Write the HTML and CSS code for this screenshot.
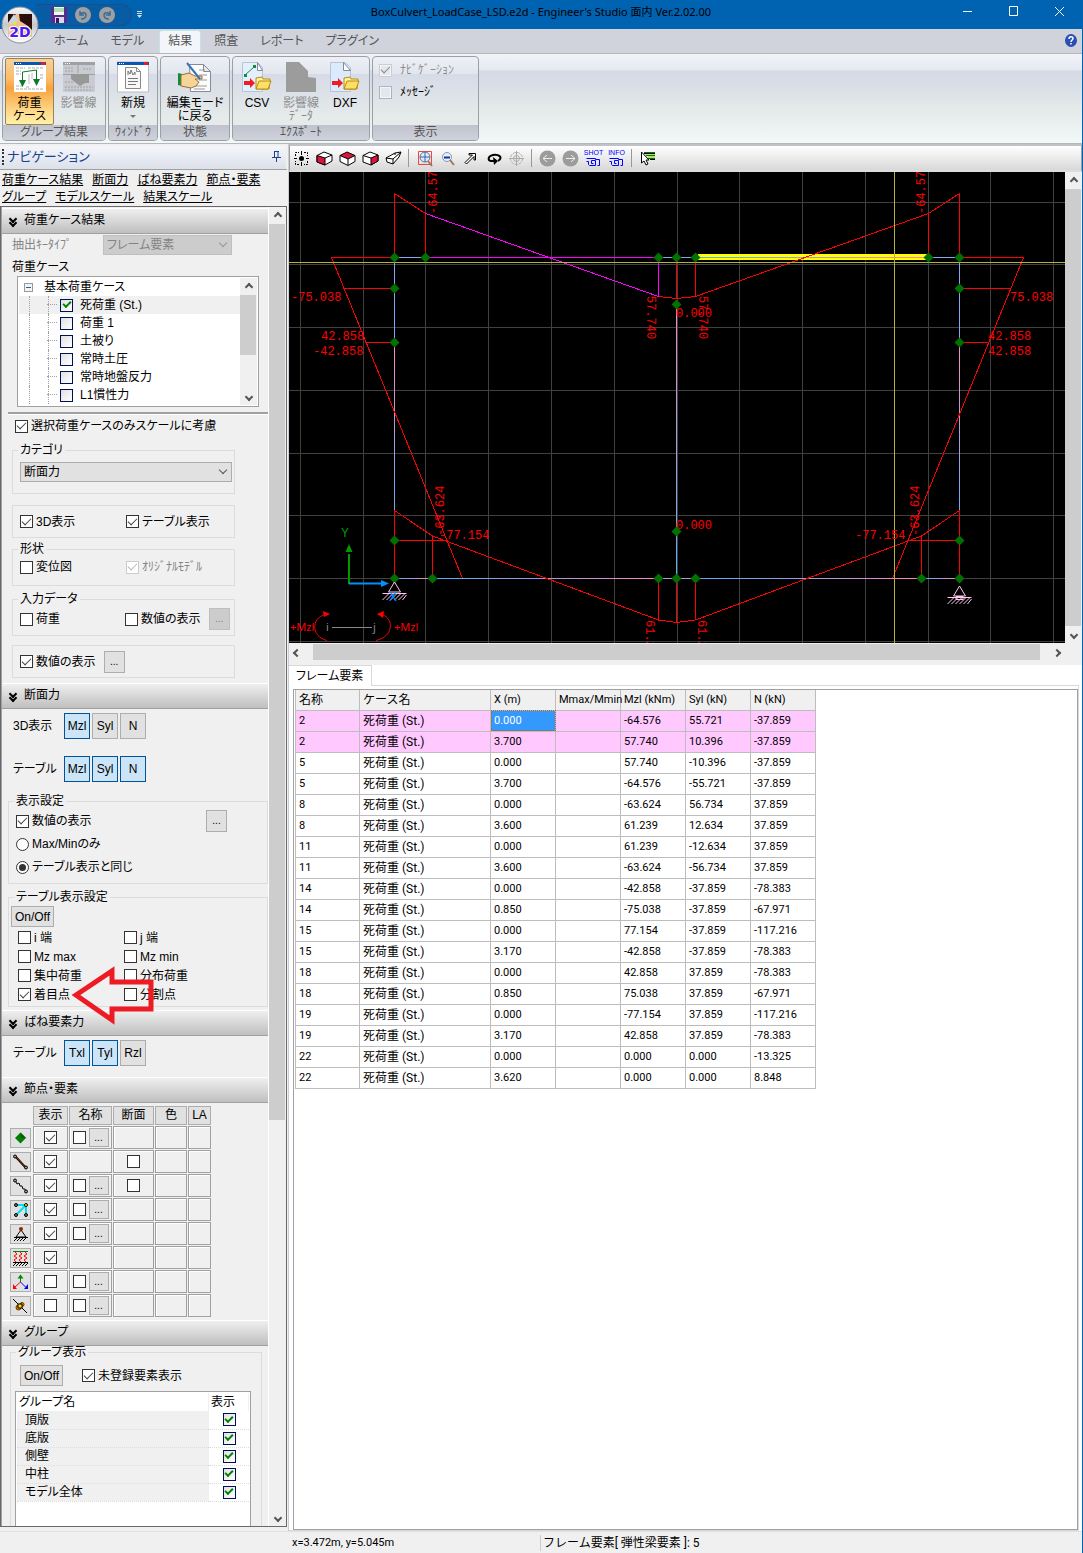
FILE: index.html
```html
<!DOCTYPE html>
<html lang="ja">
<head>
<meta charset="utf-8">
<title>BoxCulvert_LoadCase_LSD.e2d - Engineer's Studio 面内 Ver.2.02.00</title>
<link rel="stylesheet" href="styles.css">
</head>
<body>
<header class="titlebar">
  <div class="quick">
    <button class="plain" aria-label="上書き保存"><svg width="16" height="16" viewBox="0 0 16 16"><path d="M0 0h16v16H1L0 15z" fill="#5b2a8c"/><path d="M3 0h10v8H3z" fill="#f4f8f4"/><path d="M3 2h10M3 4h10" stroke="#6cc56c"/><path d="M4 10h9v6H4z" fill="#ddd6ea"/><path d="M5 11h3v5H5z" fill="#3a1560"/></svg></button>
    <button class="plain" aria-label="元に戻す"><svg width="16" height="16" viewBox="0 0 16 16"><circle cx="8" cy="8" r="8" fill="#a0a0a0"/><path d="M5 4v4h4M5 8c1-3 6-3 6 0s-2 4-5 4" fill="none" stroke="#3a6c9c" stroke-width="1.5"/></svg></button>
    <button class="plain" aria-label="やり直し"><svg width="16" height="16" viewBox="0 0 16 16"><circle cx="8" cy="8" r="8" fill="#a0a0a0"/><path d="M11 4v4H7M11 8c-1-3-6-3-6 0s2 4 5 4" fill="none" stroke="#3a6c9c" stroke-width="1.5"/></svg></button>
  </div>
  <button class="plain more" aria-label="カスタマイズ"><svg width="5" height="7" viewBox="0 0 5 7"><path d="M0 .5h5M0 2.500h5" stroke="#ddd"/><path d="M0 4h5L2.500 7z" fill="#ddd"/></svg></button>
  <h1 class="title">BoxCulvert_LoadCase_LSD.e2d - Engineer's Studio 面内 Ver.2.02.00</h1>
  <div class="wincontrols">
    <button class="plain" aria-label="最小化"><svg width="11" height="11" viewBox="0 0 11 11"><path d="M1 5.500h9" stroke="#fff"/></svg></button>
    <button class="plain" aria-label="最大化"><svg width="11" height="11" viewBox="0 0 11 11"><path d="M1.500.5h8v9h-8z" fill="none" stroke="#fff"/></svg></button>
    <button class="plain" aria-label="閉じる"><svg width="11" height="11" viewBox="0 0 11 11"><path d="M1 1l9 9M10 1l-9 9" stroke="#fff"/></svg></button>
  </div>
  <button class="plain appbutton" aria-label="メインメニュー"><svg width="40" height="40" viewBox="0 0 40 40"><defs><linearGradient id="ring" x2="0" y2="1"><stop stop-color="#f8f8fa"/><stop offset=".5" stop-color="#c6c8ce"/><stop offset="1" stop-color="#fff"/></linearGradient></defs><circle cx="20" cy="20" r="18" fill="url(#ring)" stroke="#8a8f9c"/><path d="M8 9h24v23H8z" fill="#2b0d0d"/><path d="M8 18l8-9 3 0 1 7 8 5 4 4v7H8z" fill="#f0c090"/><path d="M8 18l6-9 4 7-7 4z" fill="#c9d6dc"/><path d="M12 18l5-1-2 3z" fill="#f2ee00"/><text x="20" y="32" text-anchor="middle" class="applogo">2D</text></svg></button>
</header>

<nav class="tabs">
  <a href="#home">ホーム</a><a href="#model">モデル</a><a href="#result" class="current">結果</a><a href="#check">照査</a><a href="#report">レポート</a><a href="#plugin">プラグイン</a>
  <button class="plain help" aria-label="ヘルプ"><svg width="12" height="13" viewBox="0 0 12 13"><ellipse cx="6" cy="6.500" rx="6" ry="6.500" fill="#2a4fb4"/><path d="M4 5c0-3 4-3 4-.5C8 6 6 6 6 8M6 9v1.500" fill="none" stroke="#fff" stroke-width="1.500"/></svg></button>
</nav>

<section class="ribbon">
  <div class="rgroup">
    <div class="rbody">
      <button class="rbtn active"><svg width="32" height="32" viewBox="0 0 32 32"><path d="M0 1h32v30H0z" fill="#fff"/><path d="M0 1h32v3H0z" fill="#0a55b4"/><path d="M2 2.500h6" stroke="#fff" stroke-dasharray="1 1"/><path d="M27 1h4v3h-4z" fill="#e02020"/><path d="M2 7h9M2 10h5M2 13h5M2 25h6M14 7h15M12 26h4M26 14h4M26 17h4M2 28h28" stroke="#aaa" stroke-dasharray="3 1"/><path d="M8.500 21V11l14-2v10" fill="none" stroke="#0a7a2a"/><path d="M5 19h7l-3.500 7zM19 18h7l-3.500 7z" fill="#0a7a2a"/><path d="M15 13v10M18 12v6" stroke="#bbb"/></svg><span>荷重<br>ケース</span></button>
      <button class="rbtn off" disabled><svg width="32" height="32" viewBox="0 0 32 32"><path d="M0 1h32v30H0z" fill="#c8ccd2"/><path d="M0 1h32v3H0z" fill="#a0a0a0"/><path d="M2 2.500h6" stroke="#fff" stroke-dasharray="1 1"/><path d="M2 7h9M2 10h9M2 21h9M2 26h28M2 29h28M20 8h9" stroke="#a0a0a0" stroke-dasharray="2 1"/><path d="M15 4v8M0 13.500h32" stroke="#a0a0a0"/><path d="M8 13h18v9h-4l-5 3-9-7z" fill="#989898"/></svg><span>影響線</span></button>
    </div>
    <div class="rlabel">グループ結果</div>
  </div>
  <div class="rgroup">
    <div class="rbody">
      <button class="rbtn"><svg width="32" height="32" viewBox="0 0 32 32"><path d="M.5 1h31v30H.5z" fill="#fff" stroke="#bbb"/><path d="M0 1h32v3H0z" fill="#0a55b4"/><path d="M2 2.500h6" stroke="#fff" stroke-dasharray="1 1"/><path d="M27 1h4v3h-4z" fill="#e02020"/><path d="M8.500 6.500h11l4 4v17h-15zM19.500 6.500v4h4" fill="#f8f8f8" stroke="#888"/><path d="M11 14v-4l2 3 1-4 2 5 2-3v3M11 17.500h10M11 20.500h10M11 23.500h8" fill="none" stroke="#777"/></svg><span>新規</span><i class="drop"></i></button>
    </div>
    <div class="rlabel"><span>ｳｨﾝﾄﾞｳ</span></div>
  </div>
  <div class="rgroup">
    <div class="rbody">
      <button class="rbtn wide"><svg width="34" height="32" viewBox="0 0 34 32"><path d="M11.500 3.500h14l7 7v20h-20zM25.500 3.500v7h7" fill="#fbfcfc" stroke="#889"/><path d="M21 9h6M21 14h8M21 19h8M16 25h13M16 28h11" stroke="#999"/><path d="M0 12l4 1v12l-4-1z" fill="#138a3a"/><path d="M3 14l8-2 6 3 7 0v3h-7l4 3-3 4-5 2-10-2z" fill="#f6d49a" stroke="#9a7236"/><path d="M9 2l13 16" stroke="#3672b8" stroke-width="2"/></svg><span>編集モード<br>に戻る</span></button>
    </div>
    <div class="rlabel">状態</div>
  </div>
  <div class="rgroup">
    <div class="rbody">
      <button class="rbtn"><svg width="32" height="32" viewBox="0 0 32 32"><path d="M1.500 1.500h15l5 5v24h-20z" fill="#e4effc" stroke="#b4c4da"/><path d="M16.500 1.500l5 8h-5z" fill="#fff" stroke="#889"/><path d="M4 14l9-8" stroke="#128a4a"/><path d="M3 13h3v3H3zM12 4h3v3h-3z" fill="#128a4a"/><path d="M3 20h6v-3l5 5-5 5v-3H3z" fill="#ee1c24"/><path d="M15 17l6-1 1 2h7l-1 10H15z" fill="#fff2a0" stroke="#b88a10"/><path d="M15 28l3-8h12l-3 8z" fill="#ffe066" stroke="#b88a10"/></svg><span>CSV</span></button>
      <button class="rbtn off" disabled><svg width="32" height="32" viewBox="0 0 32 32"><path d="M1 1h13l9 9v6l8 1v14H1z" fill="#9c9c9c"/></svg><span>影響線<br>ﾃﾞｰﾀ</span></button>
      <button class="rbtn"><svg width="32" height="32" viewBox="0 0 32 32"><path d="M1.500 1.500h15l5 5v24h-20z" fill="#dcebfc" stroke="#b4c4da"/><path d="M14.500 1.500l7 8h-7z" fill="#fff" stroke="#889"/><path d="M3 20h6v-3l5 5-5 5v-3H3z" fill="#ee1c24"/><path d="M15 17l6-1 1 2h7l-1 10H15z" fill="#fff2a0" stroke="#b88a10"/><path d="M15 28l3-8h12l-3 8z" fill="#ffe066" stroke="#b88a10"/></svg><span>DXF</span></button>
    </div>
    <div class="rlabel">ｴｸｽﾎﾟｰﾄ</div>
  </div>
  <div class="rgroup">
    <div class="rbody rchecks">
      <label class="off"><input type="checkbox" class="soft" checked disabled>ﾅﾋﾞｹﾞｰｼｮﾝ</label>
      <label><input type="checkbox" class="soft">ﾒｯｾｰｼﾞ</label>
    </div>
    <div class="rlabel">表示</div>
  </div>
</section>

<div class="workspace">
<aside class="side">
  <div class="sidehead"><h2>ナビゲーション</h2><button class="plain" aria-label="固定"><svg width="9" height="11" viewBox="0 0 9 11"><path d="M2.500 0v6M6 0v6M2 .5h5M0 6.500h9M4.500 7v4" fill="none" stroke="#15428b"/></svg></button></div>
  <nav class="jump">
    <div><a href="#s1">荷重ケース結果</a><a href="#s2">断面力</a><a href="#s3">ばね要素力</a><a href="#s4">節点・要素</a></div>
    <div><a href="#s5">グループ</a><a href="#s6">モデルスケール</a><a href="#s7">結果スケール</a></div>
  </nav>
  <div class="scroller">
    <div class="panes">
      <section class="pane" id="s1">
        <h3>荷重ケース結果</h3>
        <div class="row keytype"><label for="key" class="dim">抽出ｷｰﾀｲﾌﾟ</label><span class="combo dim"><select id="key" disabled><option>フレーム要素</option></select></span></div>
        <p class="caption">荷重ケース</p>
        <div class="tree">
          <ul>
            <li class="root"><i class="minus"></i>基本荷重ケース</li>
            <li class="hot"><label><input type="checkbox" class="navy" checked>死荷重 (St.)</label></li>
            <li><label><input type="checkbox" class="navy">荷重 1</label></li>
            <li><label><input type="checkbox" class="navy">土被り</label></li>
            <li><label><input type="checkbox" class="navy">常時土圧</label></li>
            <li><label><input type="checkbox" class="navy">常時地盤反力</label></li>
            <li><label><input type="checkbox" class="navy">L1慣性力</label></li>
          </ul>
          <div class="vbar"><i class="arrow up"></i><b class="thumb treethumb"></b><i class="arrow down"></i></div>
        </div>
        <hr>
        <label class="row only"><input type="checkbox" checked>選択荷重ケースのみスケールに考慮</label>
        <fieldset class="category"><legend>カテゴリ</legend><span class="combo"><select aria-label="カテゴリ"><option>断面力</option></select></span></fieldset>
        <fieldset class="bare"><label class="half"><input type="checkbox" checked>3D表示</label><label><input type="checkbox" checked>テーブル表示</label></fieldset>
        <fieldset class="shape"><legend>形状</legend><div class="row"><label class="half"><input type="checkbox">変位図</label><label class="dim"><input type="checkbox" checked disabled>ｵﾘｼﾞﾅﾙﾓﾃﾞﾙ</label></div></fieldset>
        <fieldset class="inputdata"><legend>入力データ</legend><div class="row"><label class="half"><input type="checkbox">荷重</label><label><input type="checkbox">数値の表示</label><button class="dots" disabled>...</button></div></fieldset>
        <fieldset class="bare values"><label><input type="checkbox" checked>数値の表示</label><button class="dots">...</button></fieldset>
      </section>

      <section class="pane" id="s2">
        <h3>断面力</h3>
        <div class="row toggles"><span>3D表示</span><button class="on">Mzl</button><button>Syl</button><button>N</button></div>
        <div class="row toggles second"><span>テーブル</span><button class="on">Mzl</button><button class="on">Syl</button><button class="on">N</button></div>
        <fieldset class="display"><legend>表示設定</legend>
          <div class="row"><label><input type="checkbox" checked>数値の表示</label><button class="dots">...</button></div>
          <label class="row"><input type="radio" name="scope">Max/Minのみ</label>
          <label class="row"><input type="radio" name="scope" checked>テーブル表示と同じ</label>
        </fieldset>
        <fieldset class="tableset"><legend>テーブル表示設定</legend>
          <button class="onoff">On/Off</button>
          <div class="pairs">
            <label><input type="checkbox">i 端</label><label><input type="checkbox">j 端</label>
            <label><input type="checkbox">Mz max</label><label><input type="checkbox">Mz min</label>
            <label><input type="checkbox">集中荷重</label><label><input type="checkbox">分布荷重</label>
            <label><input type="checkbox" checked>着目点</label><label><input type="checkbox">分割点</label>
          </div>
          <svg class="pointer" width="84" height="60" viewBox="0 0 84 60"><path d="M5 29L41 5v11h39v27H41v11z" fill="none" stroke="#ed1c24" stroke-width="5"/></svg>
        </fieldset>
      </section>

      <section class="pane" id="s3">
        <h3>ばね要素力</h3>
        <div class="row toggles"><span>テーブル</span><button class="on">Txl</button><button class="on">Tyl</button><button>Rzl</button></div>
      </section>

      <section class="pane" id="s4">
        <h3>節点・要素</h3>
        <table class="matrix">
          <thead><tr><td></td><th class="c1"><button>表示</button></th><th class="c2"><button>名称</button></th><th class="c3"><button>断面</button></th><th class="c4"><button>色</button></th><th class="c5"><button>LA</button></th></tr></thead>
          <tbody>
            <tr><th><button aria-label="節点"><svg width="17" height="16" viewBox="0 0 17 16"><path d="M8.500 2.500L14 8l-5.500 5.500L3 8z" fill="#008000"/><path d="M8.500 2.500L14 8H8.500z" fill="#0a5a0a"/></svg></button></th><td><input type="checkbox" checked aria-label="表示"></td><td><input type="checkbox" aria-label="名称"><button class="dots">...</button></td><td></td><td></td><td></td></tr>
            <tr><th><button aria-label="フレーム要素"><svg width="17" height="16" viewBox="0 0 17 16"><path d="M3 2l11 12" stroke="#000" stroke-width="2"/><path d="M3 2l11 12" stroke="#a03000"/><circle cx="3" cy="2.500" r="1.500" fill="#999" stroke="#000"/><circle cx="14" cy="13.500" r="1.500" fill="#999" stroke="#000"/></svg></button></th><td><input type="checkbox" checked aria-label="表示"></td><td></td><td><input type="checkbox" aria-label="断面"></td><td></td><td></td></tr>
            <tr><th><button aria-label="ばね要素"><svg width="17" height="16" viewBox="0 0 17 16"><path d="M3 2l2 4 2-1 1 3 2 0 1 3 2 0 1 3" fill="none" stroke="#000"/><circle cx="3" cy="2.500" r="1.500" fill="#999" stroke="#000"/><circle cx="14" cy="13.500" r="1.500" fill="#999" stroke="#000"/></svg></button></th><td><input type="checkbox" checked aria-label="表示"></td><td><input type="checkbox" aria-label="名称"><button class="dots">...</button></td><td><input type="checkbox" aria-label="断面"></td><td></td><td></td></tr>
            <tr><th><button aria-label="剛体要素"><svg width="17" height="16" viewBox="0 0 17 16"><path d="M4 3h10v10M14 3L4 13" fill="none" stroke="#00e0f0" stroke-width="2"/><g fill="#777" stroke="#000"><circle cx="4" cy="3" r="1.500"/><circle cx="4" cy="13" r="1.500"/><circle cx="14" cy="13" r="1.500"/><circle cx="14" cy="3" r="1.500" fill="#ff0"/></g></svg></button></th><td><input type="checkbox" checked aria-label="表示"></td><td><input type="checkbox" aria-label="名称"><button class="dots">...</button></td><td></td><td></td><td></td></tr>
            <tr><th><button aria-label="支点"><svg width="17" height="16" viewBox="0 0 17 16"><path d="M9 4L4 11h10zM2 11.500h14M2 15l3-3M5 15l3-3M8 15l3-3M11 15l3-3" fill="none" stroke="#000"/><circle cx="9" cy="3" r="2" fill="#8a2a00"/></svg></button></th><td><input type="checkbox" checked aria-label="表示"></td><td><input type="checkbox" aria-label="名称"><button class="dots">...</button></td><td></td><td></td><td></td></tr>
            <tr><th><button aria-label="分布ばね"><svg width="17" height="16" viewBox="0 0 17 16"><path d="M1 1.500h15" stroke="#008000"/><path d="M3 2l2 2-3 2 3 2-3 2 2 2M8 2l2 2-3 2 3 2-3 2 2 2M13 2l2 2-3 2 3 2-3 2 2 2" fill="none" stroke="#f00"/><path d="M1 12.500h15M1 16l3-3M4 16l3-3M7 16l3-3M10 16l3-3M13 16l3-3" stroke="#000"/></svg></button></th><td><input type="checkbox" checked aria-label="表示"></td><td></td><td></td><td></td><td></td></tr>
            <tr><th><button aria-label="座標系"><svg width="17" height="16" viewBox="0 0 17 16"><path d="M8.500 8V2" stroke="#080"/><path d="M5.500 4.500l3-4 3 4z" fill="#080"/><path d="M8.500 8L3 13" stroke="#f00"/><path d="M1 15v-5l4 5z" fill="#f00"/><path d="M8.500 8l5 5" stroke="#00f"/><path d="M16 15v-5l-4 5z" fill="#00f"/></svg></button></th><td><input type="checkbox" aria-label="表示"></td><td><input type="checkbox" aria-label="名称"><button class="dots">...</button></td><td></td><td></td><td></td></tr>
            <tr><th><button aria-label="着目点"><svg width="17" height="16" viewBox="0 0 17 16"><path d="M1 1l14 14" stroke="#000"/><circle cx="6.500" cy="9.500" r="2.500" fill="#e80" stroke="#630"/><circle cx="10" cy="6.500" r="2" fill="#e80" stroke="#630"/><path d="M6 6h4v4H6z" fill="#fd0" stroke="#000"/></svg></button></th><td><input type="checkbox" aria-label="表示"></td><td><input type="checkbox" aria-label="名称"><button class="dots">...</button></td><td></td><td></td><td></td></tr>
          </tbody>
        </table>
      </section>

      <section class="pane" id="s5">
        <h3>グループ</h3>
        <fieldset class="groups"><legend>グループ表示</legend>
          <div class="row"><button class="onoff">On/Off</button><label><input type="checkbox" checked>未登録要素表示</label></div>
          <div class="grouplist"><table>
            <thead><tr><th>グループ名</th><th>表示</th></tr></thead>
            <tbody>
              <tr><td>頂版</td><td><input type="checkbox" class="navy" checked aria-label="頂版"></td></tr>
              <tr><td>底版</td><td><input type="checkbox" class="navy" checked aria-label="底版"></td></tr>
              <tr><td>側壁</td><td><input type="checkbox" class="navy" checked aria-label="側壁"></td></tr>
              <tr><td>中柱</td><td><input type="checkbox" class="navy" checked aria-label="中柱"></td></tr>
              <tr><td>モデル全体</td><td><input type="checkbox" class="navy" checked aria-label="モデル全体"></td></tr>
            </tbody>
          </table></div>
        </fieldset>
      </section>
    </div>
    <div class="vbar"><i class="arrow up"></i><b class="thumb sidethumb"></b><i class="arrow down"></i></div>
  </div>
</aside>

<main class="main">
  <div class="toolbar">
    <button class="plain" aria-label="全体表示"><svg width="15" height="15" viewBox="0 0 15 15"><path d="M1.500 5V1.500H5M10 1.500h3.500V5M13.500 10v3.500H10M5 13.500H1.500V10" fill="none" stroke="#000" stroke-dasharray="2 1"/><path d="M7.500 0v4M7.500 11v4M0 7.500h3M12 7.500h3" stroke="#000"/><circle cx="7.500" cy="7.500" r="2.500"/></svg></button>
    <button class="plain" aria-label="正面"><svg width="17" height="15" viewBox="0 0 17 15"><path d="M1 4.500L8 1l8 3v6l-7 4-8-3z" fill="#fff" stroke="#000"/><path d="M1 4.500L9 7v7l-8-3z" fill="#dc143c" stroke="#000"/><path d="M9 7l7-3" stroke="#000"/></svg></button>
    <button class="plain" aria-label="上面"><svg width="17" height="15" viewBox="0 0 17 15"><path d="M1 4.500v6l8 4 7-4v-6" fill="#fff" stroke="#000"/><path d="M1 4.500L8 1l8 3.500L9 8z" fill="#dc143c" stroke="#000"/><path d="M9 8v6" stroke="#000"/></svg></button>
    <button class="plain" aria-label="側面"><svg width="17" height="15" viewBox="0 0 17 15"><path d="M1 4.500L8 1l8 3v6l-7 4-8-3z" fill="#fff" stroke="#000"/><path d="M9 7l7-3v6l-7 4z" fill="#dc143c" stroke="#000"/><path d="M1 4.500L9 7" stroke="#000"/></svg></button>
    <button class="plain" aria-label="鳥瞰"><svg width="17" height="15" viewBox="0 0 17 15"><path d="M1 7l9-5 6-1-2 5-6 7-6-2zM1 7l7 1v5M8 8l8-7M10 2v2" fill="#fff" stroke="#000"/></svg></button>
    <i class="sep"></i>
    <button class="plain" aria-label="窓拡大"><svg width="16" height="17" viewBox="0 0 16 17"><path d="M1.500 1.500h13v13h-13z" fill="none" stroke="#e44"/><circle cx="8" cy="7" r="5" fill="#dcecff" stroke="#678"/><path d="M8 2v10M3 7h10" stroke="#36a"/><path d="M11 11l4 5" stroke="#976" stroke-width="2"/></svg></button>
    <button class="plain" aria-label="縮小"><svg width="15" height="15" viewBox="0 0 15 15"><circle cx="7" cy="6" r="4.500" fill="#e4f0ff" stroke="#89a"/><path d="M4 6.500h6" stroke="#139" stroke-width="2"/><path d="M10 9l4 5" stroke="#976" stroke-width="2"/></svg></button>
    <button class="plain" aria-label="移動"><svg width="13" height="13" viewBox="0 0 13 13"><path d="M1 10.500l7.500-7.500H5V1.500h6.500V8H10V4.500L2.500 12z" fill="#fff" stroke="#000"/></svg></button>
    <button class="plain" aria-label="回転"><svg width="16" height="13" viewBox="0 0 16 13"><path d="M12 9c6-4 0-7-5-6S0 10 8 9" fill="none" stroke="#000" stroke-width="2"/><path d="M7 5l5 4-4 4z"/></svg></button>
    <button class="plain" aria-label="中心"><svg width="15" height="15" viewBox="0 0 15 15"><circle cx="7.500" cy="7.500" r="6" fill="none" stroke="#aaa" stroke-dasharray="3 1"/><circle cx="7.500" cy="7.500" r="3" fill="none" stroke="#aaa"/><path d="M7.500 0v15M0 7.500h15" stroke="#aaa"/></svg></button>
    <i class="sep"></i>
    <button class="plain" aria-label="前へ"><svg width="17" height="17" viewBox="0 0 17 17"><circle cx="8.500" cy="8.500" r="8" fill="#9c9c9c"/><path d="M13 8.500H4M8 5L4 8.500 8 12" fill="none" stroke="#eee"/></svg></button>
    <button class="plain" aria-label="次へ"><svg width="17" height="17" viewBox="0 0 17 17"><circle cx="8.500" cy="8.500" r="8" fill="#9c9c9c"/><path d="M4 8.500h9M9 5l4 3.500L9 12" fill="none" stroke="#eee"/></svg></button>
    <button class="plain shot"><span>SHOT</span><svg width="15" height="10" viewBox="0 0 15 10"><path d="M.5 1.500h9v1h4v6h-2M.5 4.500h2v3l1 1h6v-5h-4v3h2" fill="none" stroke="#00f"/></svg></button>
    <button class="plain shot"><span>INFO</span><svg width="15" height="10" viewBox="0 0 15 10"><path d="M.5 1.500h9v1h4v6h-2M.5 4.500h2v3l1 1h6v-5h-4v3h2" fill="none" stroke="#00f"/></svg></button>
    <i class="sep"></i>
    <button class="plain" aria-label="選択"><svg width="16" height="15" viewBox="0 0 16 15"><path d="M4 1.500h11M6 4.500h9M8 7.500h7" stroke="#070"/><path d="M5 3h10M8 6h7" stroke="#8c0"/><path d="M4 2.500h11M10 8.500h5" stroke="#000"/><path d="M1.500 1v11l2.500-2 2 4 2-1-2-4h3z" fill="#fff" stroke="#000"/></svg></button>
  </div>

  <div class="viewport">
    <svg class="drawing" viewBox="289 172 776 471" preserveAspectRatio="xMidYMin slice">
      <defs>
        <linearGradient id="gl" x2="1"><stop stop-color="#50b0ff"/><stop offset="1" stop-color="#ff80c0"/></linearGradient>
        <linearGradient id="gv" x2="0" y2="1"><stop stop-color="#ff88c0"/><stop offset="1" stop-color="#50b0ff"/></linearGradient>
        <path id="node" d="M0-5L5 0 0 5-5 0z" fill="#007000"/>
        <path id="support" d="M0-17L-6-7H6zM-12-5.500h24M-12 1l6-6M-8 1l6-6M-4 1l6-6M0 1l6-6M4 1l6-6M8 1l4-5" fill="none" stroke="#ffc8f0"/>
      </defs>
      <path d="M289 172h776v471H289z"/>
      <path class="grid" d="M300.500 172v471M363.500 172v471M425.500 172v471M488.500 172v471M551.500 172v471M614.500 172v471M677.500 172v471M739.500 172v471M802.500 172v471M865.500 172v471M928.500 172v471M990.500 172v471M1053.500 172v471M289 202.500h776M289 264.500h776M289 327.500h776M289 390.500h776M289 453.500h776M289 515.500h776M289 578.500h776M289 641.500h776"/>
      <path d="M698 254h230v6H698z" fill="#ff0"/>
      <g>
        <path d="M394 257h304v1H394zM928 257h31v1h-31z" fill="#88a8f0"/><path d="M698 257h230v1H698z" fill="url(#gl)"/>
        <path d="M394 578h38v1h-38z" fill="url(#gl)"/><path d="M432 578h226v1H432z" fill="url(#gl)"/><path d="M658 578h38v1h-38z" fill="#a8a0e8"/><path d="M696 578h226v1H696z" fill="url(#gl)"/><path d="M922 578h38v1h-38z" fill="url(#gl)"/>
        <path d="M394 258h1v84h-1zM959 258h1v84h-1z" fill="#80a8f0"/><path d="M394 342h1v198h-1zM959 342h1v198h-1z" fill="url(#gv)"/><path d="M676 304h1v227h-1zM676 531h1v47h-1z" fill="url(#gv)"/>
      </g>
      <g class="force">
        <path d="M394.500 257.500v-64l31 20v44M658.500 296.500l18 2 19-2 233-83 31-20v64M676.500 258v40M695.500 258v38M928.500 213.500v44"/>
        <path d="M394.500 257.500h-63l131 321M343 288.500h51M365 342.500h29M394 540.500h53M959.500 257.500h64l-131 321M1010 288.500h-51M988 342.500h-29M959 540.500h-52"/>
        <path d="M394.500 578.500v-68l38 25.500 226 84 18 2.500 19-2.500 226-84 38-25.500v68M432.500 536v42M658.500 578v42M676.500 578v44M695.500 578v42M921.500 536v42"/>
        <path class="selected" d="M425.500 257.500h233v39l-233-83"/>
      </g>
      <path d="M289 262.500h776M894.500 172v471" stroke="#b4b43c"/>
      <g class="value">
        <text x="291" y="301">-75.038</text><text x="321" y="340">42.858</text><text x="313" y="355">-42.858</text>
        <text x="1010" y="301">75.038</text><text x="988" y="340">42.858</text><text x="988" y="355">42.858</text>
        <text x="676" y="317">0.000</text><text x="676" y="529">0.000</text>
        <text x="439" y="539">-77.154</text><text x="855" y="539">-77.154</text>
        <text transform="translate(437 214) rotate(-90)">-64.576</text><text transform="translate(925 214) rotate(-90)">-64.576</text>
        <text transform="translate(647 296) rotate(90)">57.740</text><text transform="translate(699 296) rotate(90)">57.740</text>
        <text transform="translate(444 536) rotate(-90)">-63.624</text><text transform="translate(919 536) rotate(-90)">-63.624</text>
        <text transform="translate(646 620) rotate(90)">61.239</text><text transform="translate(698 620) rotate(90)">61.239</text>
      </g>
      <g>
        <use href="#node" x="394.500" y="257.500"/><use href="#node" x="425.500" y="257.500"/><use href="#node" x="658.500" y="257.500"/><use href="#node" x="676.500" y="257.500"/><use href="#node" x="695.500" y="257.500"/><use href="#node" x="928.500" y="257.500"/><use href="#node" x="959.500" y="257.500"/>
        <use href="#node" x="394.500" y="288.500"/><use href="#node" x="394.500" y="342.500"/><use href="#node" x="394.500" y="540.500"/><use href="#node" x="959.500" y="288.500"/><use href="#node" x="959.500" y="342.500"/><use href="#node" x="959.500" y="540.500"/>
        <use href="#node" x="676.500" y="304.500"/><use href="#node" x="676.500" y="531.500"/>
        <use href="#node" x="394.500" y="578.500"/><use href="#node" x="432.500" y="578.500"/><use href="#node" x="658.500" y="578.500"/><use href="#node" x="676.500" y="578.500"/><use href="#node" x="695.500" y="578.500"/><use href="#node" x="921.500" y="578.500"/><use href="#node" x="959.500" y="578.500"/>
      </g>
      <use href="#support" x="394.500" y="599"/><use href="#support" x="959.500" y="603"/><path d="M956 596.500h7v3h-7z" fill="none" stroke="#ffc8f0"/>
      <path d="M349 584v-30" stroke="#009a00" stroke-width="2"/><path d="M345.500 552l3.500-8 3.500 8z" fill="#009a00"/>
      <path d="M349 583.500h34" stroke="#0090ff" stroke-width="2"/><path d="M381 580l8 3.500-8 3.500z" fill="#0090ff"/>
      <text x="341" y="537" class="axis" fill="#009a00">Y</text><text x="389" y="601" class="axis" fill="#0090ff">X</text>
      <path d="M327 640.500c-16-4-16-22-2-26M376 640.500c18-4 18-22 6-26" fill="none" stroke="#f00"/><path d="M323 611l7 3-6 3zM384 611l-7 3 6 4z" fill="#f00"/>
      <path d="M332 627.500h40" stroke="#888"/>
      <text x="290" y="631" class="sign red">+Mzl</text><text x="394" y="631" class="sign red">+Mzl</text><text x="326" y="631" class="sign">i</text><text x="373" y="631" class="sign">j</text>
    </svg>
    <div class="vbar"><i class="arrow up"></i><b class="thumb"></b><i class="arrow down"></i></div>
  </div>
  <div class="hbar"><i class="arrow left"></i><b class="thumb"></b><i class="arrow right"></i></div>

  <div class="resulttabs"><button>フレーム要素</button></div>
  <div class="resultpage"><div class="results">
    <table>
      <thead><tr><th class="n">名称</th><th class="k">ケース名</th><th>X (m)</th><th>Mmax/Mmin</th><th>Mzl (kNm)</th><th>Syl (kN)</th><th>N (kN)</th></tr></thead>
      <tbody>
        <tr class="pink"><td>2</td><td>死荷重 (St.)</td><td class="cursor">0.000</td><td></td><td>-64.576</td><td>55.721</td><td>-37.859</td></tr>
        <tr class="pink"><td>2</td><td>死荷重 (St.)</td><td>3.700</td><td></td><td>57.740</td><td>10.396</td><td>-37.859</td></tr>
        <tr><td>5</td><td>死荷重 (St.)</td><td>0.000</td><td></td><td>57.740</td><td>-10.396</td><td>-37.859</td></tr>
        <tr><td>5</td><td>死荷重 (St.)</td><td>3.700</td><td></td><td>-64.576</td><td>-55.721</td><td>-37.859</td></tr>
        <tr><td>8</td><td>死荷重 (St.)</td><td>0.000</td><td></td><td>-63.624</td><td>56.734</td><td>37.859</td></tr>
        <tr><td>8</td><td>死荷重 (St.)</td><td>3.600</td><td></td><td>61.239</td><td>12.634</td><td>37.859</td></tr>
        <tr><td>11</td><td>死荷重 (St.)</td><td>0.000</td><td></td><td>61.239</td><td>-12.634</td><td>37.859</td></tr>
        <tr><td>11</td><td>死荷重 (St.)</td><td>3.600</td><td></td><td>-63.624</td><td>-56.734</td><td>37.859</td></tr>
        <tr><td>14</td><td>死荷重 (St.)</td><td>0.000</td><td></td><td>-42.858</td><td>-37.859</td><td>-78.383</td></tr>
        <tr><td>14</td><td>死荷重 (St.)</td><td>0.850</td><td></td><td>-75.038</td><td>-37.859</td><td>-67.971</td></tr>
        <tr><td>15</td><td>死荷重 (St.)</td><td>0.000</td><td></td><td>77.154</td><td>-37.859</td><td>-117.216</td></tr>
        <tr><td>15</td><td>死荷重 (St.)</td><td>3.170</td><td></td><td>-42.858</td><td>-37.859</td><td>-78.383</td></tr>
        <tr><td>18</td><td>死荷重 (St.)</td><td>0.000</td><td></td><td>42.858</td><td>37.859</td><td>-78.383</td></tr>
        <tr><td>18</td><td>死荷重 (St.)</td><td>0.850</td><td></td><td>75.038</td><td>37.859</td><td>-67.971</td></tr>
        <tr><td>19</td><td>死荷重 (St.)</td><td>0.000</td><td></td><td>-77.154</td><td>37.859</td><td>-117.216</td></tr>
        <tr><td>19</td><td>死荷重 (St.)</td><td>3.170</td><td></td><td>42.858</td><td>37.859</td><td>-78.383</td></tr>
        <tr><td>22</td><td>死荷重 (St.)</td><td>0.000</td><td></td><td>0.000</td><td>0.000</td><td>-13.325</td></tr>
        <tr><td>22</td><td>死荷重 (St.)</td><td>3.620</td><td></td><td>0.000</td><td>0.000</td><td>8.848</td></tr>
      </tbody>
    </table>
  </div></div>
</main>
</div>
<footer class="status"><span class="coord">x=3.472m, y=5.045m</span><span class="target">フレーム要素[ 弾性梁要素 ]: 5</span></footer>
</body>
</html>
```
FILE: styles.css
```css
*, *::before, *::after { box-sizing: border-box; }
html, body { height: 100%; margin: 0; }
body {
  display: flex; flex-direction: column; min-height: 900px; min-width: 900px;
  border-right: 1px solid #0063b1; background: #d0d3dc; color: #000;
  font: 12px/16px "Liberation Sans", "Noto Sans CJK JP", sans-serif;
  font-feature-settings: "palt";
}
button, select, input { font: inherit; font-feature-settings: inherit; color: inherit; margin: 0; }
h1, h2, h3, p, ul { margin: 0; padding: 0; font-size: 12px; font-weight: 400; list-style: none; }
svg { display: block; flex: none; }
a { color: inherit; }
button { background: #e1e1e1; border: 1px solid #adadad; padding: 0; border-radius: 0; white-space: nowrap; }
button:disabled { background: #ccc; border-color: #bfbfbf; color: #838383; }
.plain { background: none; border: 0; display: flex; align-items: center; justify-content: center; }
.dim { color: #838383; }

/* check boxes and radio buttons */
input[type=checkbox], input[type=radio] {
  appearance: none; flex: none; width: 13px; height: 13px;
  border: 1px solid #333; background: #fff; display: grid; place-items: center;
}
input[type=radio] { border-radius: 50%; }
input[type=checkbox]:checked::after {
  content: ""; width: 9px; height: 5px; margin-top: -3px;
  border: solid #444; border-width: 0 0 1px 1px; transform: rotate(-45deg);
}
input[type=radio]:checked::after { content: ""; width: 7px; height: 7px; border-radius: 50%; background: #333; }
input[type=checkbox]:disabled { border-color: #ccc; }
input[type=checkbox]:disabled::after { border-color: #bbb; }
input.navy { border-color: #001058; background: linear-gradient(135deg, #e0e0e0, #fff); }
input.navy:checked::after { width: 8px; height: 5px; border-color: #008000; border-width: 0 0 2px 2px; }
input.soft { border-color: #a8b4c4; background: #e4e8ee; box-shadow: inset 0 0 0 1px #f4f6f8; }
input.soft:disabled::after { border-color: #888; }
label { display: flex; align-items: center; gap: 3px; white-space: nowrap; }

/* title bar */
.titlebar { position: relative; flex: none; height: 29px; display: flex; align-items: center; background: #0063b1; padding-left: 36px; }
.quick { display: flex; align-items: center; gap: 8px; width: 96px; height: 22px; padding-left: 15px; border: 1px solid #17508c; border-left: 0; border-radius: 0 11px 11px 0; background: #075ca4; }
.more { margin-left: 5px; }
.title { position: absolute; left: 0; right: 0; top: 3px; line-height: 18px; text-align: center; font-family: "Noto Sans", "Noto Sans CJK JP", sans-serif; pointer-events: none; font-size: 11px; }
.wincontrols { margin: 0 0 6px auto; display: flex; }
.wincontrols button { width: 46px; height: 20px; }
.appbutton { position: absolute; left: 0; top: 5px; z-index: 2; }
.applogo { font: bold 14px "DejaVu Sans", sans-serif; fill: #4a1af0; stroke: #fff; paint-order: stroke; stroke-width: 2px; }

/* ribbon */
.tabs { flex: none; height: 25px; display: flex; align-items: flex-end; padding-left: 43px; color: #555; border-bottom: 1px solid #b8b8b8; }
.tabs a { height: 23px; padding: 0 10px; border: 1px solid transparent; text-decoration: none; line-height: 21px; }
.tabs .current { background: #f2f5f9; border-color: #c4e4e4; border-bottom: 0; border-radius: 3px 3px 0 0; margin: 0 2px 0 4px; padding: 0 8px; }
.help { margin: 0 5px 6px auto; }
.ribbon { flex: none; display: flex; gap: 2px; height: 90px; padding: 2px; border-bottom: 1px solid #b8b8b8; background: linear-gradient(#f2f3f8, #e4e8f0 18%, #d5dae6 19%, #d8dee6 35%, #e6ebea 65%, #f0f9f9); }
.rgroup { display: flex; flex-direction: column; border: 1px solid #9c9fa6; border-radius: 4px; overflow: hidden; background: linear-gradient(#eef0f5, #e2e6ee 20%, #d6dbe7 21%, #e6ebea 75%); }
.rgroup:nth-child(1) { width: 104px; }
.rgroup:nth-child(2) { width: 50px; }
.rgroup:nth-child(3) { width: 70px; }
.rgroup:nth-child(4) { width: 138px; }
.rgroup:nth-child(5) { width: 107px; }
.rbody { flex: 1; display: flex; justify-content: center; padding-top: 1px; }
.rlabel { height: 15px; line-height: 14px; text-align: center; color: #555; background: linear-gradient(#c0c3cd, #cfd2db); }
.rbtn { width: 49px; height: 67px; background: none; border: 1px solid transparent; display: flex; flex-direction: column; align-items: center; padding-top: 2px; line-height: 13px; }
.rbtn.wide { width: 66px; }
.rbtn span { margin-top: 4px; }
.rgroup:nth-child(4) .rbtn { width: 44px; }
.rbtn.active { border-color: #9a8254; border-radius: 2px; background: linear-gradient(#f4d29c, #fbbd68 30%, #f8a23c 45%, #fdd88a 80%, #fff0a8); }
.rbtn.off, .off { color: #8c8c8c; background: none; border-color: transparent; }
.drop { margin-top: 5px; border: 3px solid transparent; border-top-color: #777; border-bottom: 0; }
.rchecks { flex-direction: column; justify-content: flex-start; gap: 6px; padding: 5px 0 0 6px; }
.rchecks label { gap: 8px; }

/* workspace */
.workspace { flex: 1; min-height: 0; display: flex; }
.side { flex: none; width: 289px; display: flex; flex-direction: column; padding: 2px 1px 4px 0; background: #f0f0f0; border-right: 1px solid #c8ccd6; }
.sidehead { flex: none; height: 23px; display: flex; align-items: center; justify-content: space-between; padding: 0 5px 2px 4px; margin-right: 1px; background: linear-gradient(#f4f6fa, #dce0ea); }
.sidehead h2 { color: #15428b; font-size: 13px; border-left: 2px dotted #333; padding-left: 3px; margin-left: -2px; }
.jump { flex: none; height: 37px; border-top: 1px solid #a0a0a0; padding: 2px 2px; }
.jump div { display: flex; gap: 9px; line-height: 17px; white-space: nowrap; }
.scroller { flex: 1; min-height: 0; display: flex; border: 1px solid #696969; background: #f0f0f0; overflow: hidden; }
.panes { flex: 1; min-width: 0; overflow: hidden; border-left: 1px solid #a0a0a0; border-right: 1px solid #fff; padding-top: 1px; }
.row { display: flex; align-items: center; }
.pane h3 { height: 26px; line-height: 22px; padding-left: 22px; background: linear-gradient(#efefef, #bfbfbf); border-top: 1px solid #fff; border-bottom: 1px solid #a0a0a0; position: relative; }
.pane h3::before, .pane h3::after { content: ""; position: absolute; left: 8px; top: 7px; width: 6px; height: 6px; border: solid #000; border-width: 0 2px 2px 0; transform: rotate(45deg); }
.pane h3::after { top: 11px; }
.keytype { height: 20px; margin: 1px 0 0 10px; }
.keytype label { width: 91px; }
.keytype .combo { width: 129px; }
.combo { position: relative; display: block; height: 20px; }
.combo::after { content: ""; position: absolute; right: 6px; top: 5px; width: 6px; height: 6px; border: solid #555; border-width: 0 1px 1px 0; transform: rotate(45deg); }
.combo.dim::after { border-color: #999; }
.combo select { appearance: none; display: block; width: 100%; height: 20px; padding: 0 3px; border: 1px solid #adadad; border-radius: 0; background: #e1e1e1; line-height: 16px; }
.combo select:disabled { background: #ccc; border-color: #bfbfbf; color: #838383; opacity: 1; }
.caption { height: 14px; line-height: 14px; margin: 5px 0 2px 10px; }
.tree { display: flex; height: 131px; margin: 0 9px 0 15px; border: 1px solid #a0a0a0; background: #fff; padding: 1px; }
.tree ul { flex: 1; }
.tree li { height: 18px; padding-left: 41px; display: flex; align-items: center; position: relative; }
.tree li label { gap: 7px; }
.tree li:not(.root)::before { content: ""; position: absolute; left: 10px; top: 0; width: 20px; height: 18px; border: dotted #a0a0a0; border-width: 0 1px; }
.tree li:not(.root)::after { content: ""; position: absolute; left: 28px; top: 8px; width: 10px; border-top: 1px dotted #a0a0a0; }
.tree .root { padding-left: 5px; gap: 11px; }
.minus { width: 9px; height: 9px; border: 1px solid #999; background: linear-gradient(#2a5bb0, #2a5bb0) center / 5px 1px no-repeat #f4f4f4; }
.hot { background: #f0f0f0; }
hr { height: 3px; margin: 5px 0 3px 6px; border: 0; background: #a0a0a0; border-bottom: 1px solid #fff; }
.only { height: 16px; margin-left: 13px; gap: 3px; }
fieldset { margin: 0 0 0 10px; width: 223px; border: 1px solid #dcdcdc; padding: 0; min-width: 0; }
legend { height: 12px; line-height: 12px; margin-left: -2px; padding: 0 2px; white-space: nowrap; }
.category { height: 50px; margin-top: 10px; padding: 6px 2px 0 7px; }
.bare { height: 33px; margin-top: 11px; padding-left: 7px; display: flex; align-items: center; }
.values { margin-top: 9px; }
.half { width: 106px; }
.shape { height: 43px; margin-top: 5px; padding: 4px 0 0 7px; }
.inputdata { height: 43px; margin-top: 7px; padding: 3px 0 0 7px; }
.inputdata .half { width: 105px; }
.dots { width: 21px; height: 22px; line-height: 18px; margin-left: 8px; font-size: 10px; text-align: center; flex: none; }
#s1 { padding-bottom: 5px; }
.toggles { gap: 2px; margin: 4px 0 0 11px; }
.toggles span { width: 49px; white-space: nowrap; }
.toggles button { width: 26px; height: 26px; }
.toggles .on { background: #cce4f7; border-color: #005499; }
.second { margin-top: 17px; }
.display, .tableset { width: auto; margin-left: 6px; }
.display { height: 89px; margin-top: 13px; padding: 3px 40px 0 7px; }
.display .row { height: 22px; margin-bottom: 1px; justify-content: space-between; }
.display label.row { justify-content: flex-start; }
.tableset { height: 116px; margin-top: 7px; margin-bottom: 3px; padding: 3px 0 0 2px; position: relative; z-index: 1; }
.tableset legend { margin-left: 3px; }
.onoff { width: 43px; height: 21px; display: block; }
.pairs { display: grid; grid-template-columns: 106px 1fr; grid-auto-rows: 19px; padding: 1px 0 0 7px; }
.pointer { position: absolute; left: 62px; top: 63px; }
#s3 { padding-bottom: 11px; }

/* node and element matrix */
.matrix { border-spacing: 1px; margin: 1px 0 2px 7px; }
.matrix th, .matrix td { padding: 0; font-weight: 400; height: 23px; line-height: 0; text-align: center; vertical-align: middle; }
.matrix thead td { width: 22px; height: 20px; }
.matrix thead th { height: 20px; }
.matrix thead button { width: 100%; height: 19px; line-height: 16px; display: block; }
.matrix tbody td { border: 1px solid #a0a0a0; box-shadow: inset 1px 1px #fff; }
.matrix tbody th button { width: 21px; height: 20px; padding: 1px; display: block; }
.matrix input { display: inline-grid; vertical-align: middle; }
.matrix .dots { width: 20px; height: 19px; margin-left: 3px; vertical-align: middle; line-height: 14px; }
.c1 { width: 35px; } .c2 { width: 43px; } .c3 { width: 41px; } .c4 { width: 32px; } .c5 { width: 23px; }

/* groups */
.groups { width: auto; margin: 0 6px 0 8px; height: 400px; padding: 7px 10px 0 4px; }
.groups legend { margin-left: 1px; }
.groups .row { padding-left: 5px; gap: 19px; }
.grouplist { height: 300px; margin-top: 5px; border: 1px solid #a0a0a0; background: #fff; padding: 1px; }
.grouplist table { width: 100%; border-collapse: collapse; }
.grouplist th { height: 18px; padding: 0 2px; text-align: left; font-weight: 400; }
.grouplist th:last-child { width: 40px; border: 1px solid #f0f0f0; border-width: 0 1px; white-space: nowrap; }
.grouplist td { height: 18px; padding: 0 0 0 8px; line-height: 16px; border-bottom: 1px dotted #ddd; }
.grouplist td:first-child { background: #f0f0f0; }
.grouplist td:last-child { padding-left: 14px; }

/* scroll bars */
.vbar { flex: none; width: 17px; display: flex; flex-direction: column; justify-content: space-between; background: #f0f0f0; }
.vbar .thumb { flex: 1; }
.vbar .treethumb { flex: 0 0 60px; margin-bottom: auto; }
.vbar .sidethumb { flex: 0 0 896px; margin-bottom: auto; }
.thumb { background: #cdcdcd; margin-right: 1px; }
.arrow { flex: none; width: 17px; height: 17px; display: grid; place-items: center; }
.arrow::after { content: ""; width: 6px; height: 6px; border: solid #555; border-width: 2px 0 0 2px; }
.up::after { transform: rotate(45deg); }
.down::after { transform: rotate(225deg); }
.left::after { transform: rotate(-45deg); }
.right::after { transform: rotate(135deg); }
.hbar { flex: none; height: 22px; padding: 1px 16px 5px 0; display: flex; background: #f0f0f0; }
.hbar .thumb { flex: 1; margin: 0; }
.hbar .left { width: 24px; padding-right: 8px; }
.hbar .right { width: 26px; padding-left: 8px; }

/* main view */
.main { flex: 1; min-width: 0; display: flex; flex-direction: column; background: #fff; }
.toolbar { flex: none; height: 28px; display: flex; align-items: center; border: 1px solid #a0a0a0; border-top: 2px solid #c0c2c8; border-bottom: 2px solid #ddd; background: linear-gradient(#fff, #d8d8d8); }
.toolbar button { width: 23px; height: 23px; }
.sep { width: 1px; height: 18px; margin: 0 4px 0 3px; background: #999; }
.toolbar .shot { flex-direction: column; color: #00f; font: 7px/8px "Liberation Sans", sans-serif; }
.viewport { flex: none; display: flex; background: #f0f0f0; }
.drawing { flex: 1; min-width: 0; }
.grid { stroke: #404040; fill: none; }
.force { fill: none; stroke: #f00; shape-rendering: crispEdges; }
.force .selected { stroke: #f0f; }
.value { fill: #f00; font: 12px "Liberation Mono", monospace; }
.axis { font: 13px "Liberation Mono", monospace; }
.sign { font: 11px "Noto Sans", sans-serif; fill: #888; }
.sign.red { fill: #f00; }
.resulttabs { flex: none; height: 20px; display: flex; }
.resulttabs button { height: 21px; padding: 0 8px 0 7px; background: #fff; border: 1px solid #d9d9d9; border-width: 1px 1px 0 0; position: relative; z-index: 1; line-height: 18px; }
.resultpage { flex: 1; min-height: 0; margin-right: 3px; border: 1px solid #d9d9d9; border-left: 0; padding: 3px 0 0 4px; }
.results { height: 100%; border: 1px solid #a0a0a0; padding: 0 1px; overflow: hidden; }
.results table { border-collapse: collapse; table-layout: fixed; width: 521px; }
.results th, .results td { width: 65px; height: 21px; padding: 0 0 0 3px; border: 1px solid #bdbdbd; text-align: left; white-space: nowrap; font: 11px/16px Roboto, "Noto Sans CJK JP", sans-serif; }
.results th { height: 20px; background: #f0f0f0; border-top: 0; }
.results .n { width: 64px; }
.results .k { width: 131px; }
.results td:nth-child(2), .results .k, .results .n { font-size: 12px; }
.results .pink td { background: #ffc8ff; }
.results .pink .cursor { background: #3399ff; color: #fff; outline: 1px dotted #c06010; outline-offset: -1px; }

.status { flex: none; height: 22px; display: flex; align-items: center; background: #f0f0f0; padding-left: 292px; font: 11px/16px Roboto, "Noto Sans CJK JP", sans-serif; border-top: 1px solid #e0e0e0; }
.coord { width: 248px; }
.target { border-left: 1px solid #ccc; padding-left: 2px; font-size: 12px; }
```
